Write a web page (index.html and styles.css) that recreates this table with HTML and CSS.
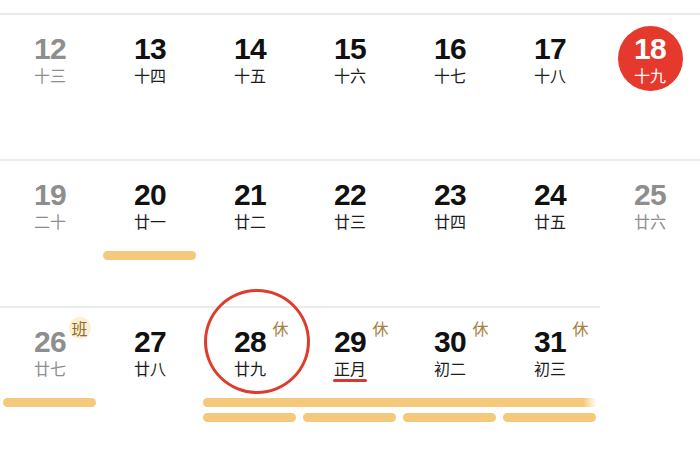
FILE: index.html
```html
<!DOCTYPE html>
<html lang="zh">
<head>
<meta charset="utf-8">
<link rel="stylesheet" href="styles.css">
</head>
<body>
<div class="cal">
  <div class="week">
    <div class="day gray"><span class="num">12</span><span class="lunar">十三</span></div>
    <div class="day"><span class="num">13</span><span class="lunar">十四</span></div>
    <div class="day"><span class="num">14</span><span class="lunar">十五</span></div>
    <div class="day"><span class="num">15</span><span class="lunar">十六</span></div>
    <div class="day"><span class="num">16</span><span class="lunar">十七</span></div>
    <div class="day"><span class="num">17</span><span class="lunar">十八</span></div>
    <div class="day today"><span class="num">18</span><span class="lunar">十九</span></div>
  </div>
  <div class="week mid">
    <div class="day gray"><span class="num">19</span><span class="lunar">二十</span></div>
    <div class="day"><span class="num">20</span><span class="lunar">廿一</span></div>
    <div class="day"><span class="num">21</span><span class="lunar">廿二</span></div>
    <div class="day"><span class="num">22</span><span class="lunar">廿三</span></div>
    <div class="day"><span class="num">23</span><span class="lunar">廿四</span></div>
    <div class="day"><span class="num">24</span><span class="lunar">廿五</span></div>
    <div class="day gray"><span class="num">25</span><span class="lunar">廿六</span></div>
    <div class="bar lane1 c2"></div>
  </div>
  <div class="week last">
    <div class="day gray"><span class="num">26</span><span class="lunar">廿七</span><span class="badge work">班</span></div>
    <div class="day"><span class="num">27</span><span class="lunar">廿八</span></div>
    <div class="day selected"><span class="ring"></span><span class="num">28</span><span class="lunar">廿九</span><span class="badge">休</span></div>
    <div class="day"><span class="num">29</span><span class="lunar festival">正月</span><span class="badge">休</span></div>
    <div class="day"><span class="num">30</span><span class="lunar">初二</span><span class="badge">休</span></div>
    <div class="day"><span class="num">31</span><span class="lunar">初三</span><span class="badge">休</span></div>
    <div class="bar lane1 c1"></div>
    <div class="bar lane1 long"></div>
    <div class="bar lane2 c3"></div>
    <div class="bar lane2 c4"></div>
    <div class="bar lane2 c5"></div>
    <div class="bar lane2 c6"></div>
  </div>
</div>
</body>
</html>
```

FILE: styles.css
```css
* { box-sizing: border-box; }
html, body {
  margin: 0;
  padding: 0;
  background: #ffffff;
}
body {
  width: 700px;
  height: 452px;
  overflow: hidden;
  font-family: "Liberation Sans", "Noto Sans CJK SC", sans-serif;
  color: #111111;
}
.cal {
  padding-top: 13px;
}
.week {
  display: grid;
  grid-template-columns: repeat(7, 100px);
  grid-template-rows: 73px 9px 9px;
  row-gap: 6px;
  align-content: start;
  border-top: 2px solid #ebebeb;
  padding-top: 11px;
  height: 146px;
}
.week.mid { height: 147px; }
.week.last {
  width: 600px;
  height: auto;
  grid-template-columns: repeat(6, 100px);
}
.day {
  position: relative;
  grid-row: 1;
  justify-self: center;
  align-self: start;
  width: 65px;
  height: 65px;
  padding-top: 8px;
  display: flex;
  flex-direction: column;
  align-items: center;
}
.num {
  font-family: "Liberation Sans", sans-serif;
  font-weight: 700;
  font-size: 30px;
  line-height: 30px;
  letter-spacing: -0.8px;
}
.lunar {
  font-family: "Noto Sans CJK SC", sans-serif;
  font-size: 16px;
  line-height: 18px;
  margin-top: 2px;
  color: #1c1c1c;
}
.gray .num, .gray .lunar { color: #8e8e8e; }
.today {
  background: #e5392d;
  border-radius: 50%;
}
.today .num, .today .lunar { color: #ffffff; }
.festival {
  position: relative;
}
.festival::after {
  content: "";
  position: absolute;
  left: -1px;
  right: -1px;
  bottom: -5px;
  height: 3px;
  border-radius: 2px;
  background: #d8392e;
}
.badge {
  position: absolute;
  left: 55px;
  top: 1px;
  font-family: "Noto Sans CJK SC", sans-serif;
  font-size: 16px;
  line-height: 17px;
  color: #a5823f;
}
.badge.work {
  left: 51px;
  top: -2px;
  width: 22px;
  height: 22px;
  border-radius: 50%;
  background: #fcefd3;
  color: #8e6a2a;
  line-height: 22px;
  text-align: center;
}
.ring {
  position: absolute;
  left: -14px;
  top: -30px;
  width: 106px;
  height: 105px;
  border: 3px solid #de3c2c;
  border-radius: 50%;
}
.bar {
  height: 9px;
  border-radius: 5px;
  margin: 0 4px 0 3px;
  background: #f5c97b;
}
.lane1 { grid-row: 2; }
.lane2 { grid-row: 3; }
.c1 { grid-column: 1; }
.c2 { grid-column: 2; }
.c3 { grid-column: 3; }
.c4 { grid-column: 4; }
.c5 { grid-column: 5; }
.c6 { grid-column: 6; }
.long {
  grid-column: 3 / 7;
  margin-right: 3px;
  border-radius: 5px 0 0 5px;
  background: linear-gradient(90deg, #f5c97b calc(100% - 14px), rgba(245, 201, 123, 0));
}
```
